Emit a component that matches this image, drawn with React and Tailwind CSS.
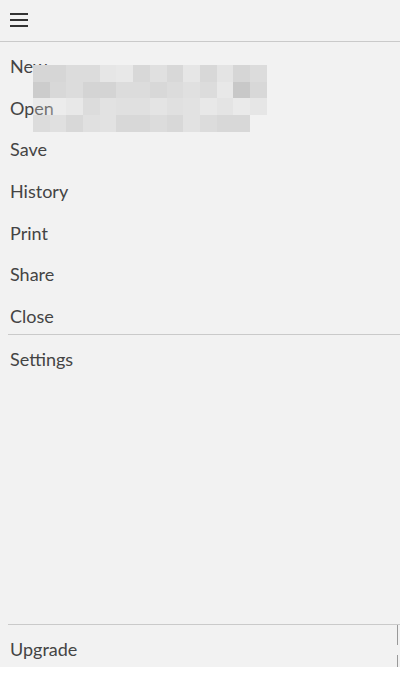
import React from 'react';

const ITEMS = ['New', 'Open', 'Save', 'History', 'Print', 'Share', 'Close'];

// pixelated blur that covers part of the menu in the screenshot
const MOSAIC = [
  ['bg-[#d6d6d6]', 'bg-[#d6d6d6]', 'bg-[#dcdcdc]', 'bg-[#dcdcdc]', 'bg-[#e6e6e6]', 'bg-[#e8e8e8]', 'bg-[#d8d8d8]', 'bg-[#e0e0e0]', 'bg-[#d8d8d8]', 'bg-[#e6e6e6]', 'bg-[#d8d8d8]', 'bg-[#e4e4e4]', 'bg-[#d6d6d6]', 'bg-[#dcdcdc]'],
  ['bg-[#cccccc]', 'bg-[#d8d8d8]', 'bg-[#dcdcdc]', 'bg-[#d4d4d4]', 'bg-[#d4d4d4]', 'bg-[#dcdcdc]', 'bg-[#dcdcdc]', 'bg-[#d8d8d8]', 'bg-[#dcdcdc]', 'bg-[#e0e0e0]', 'bg-[#dcdcdc]', 'bg-[#e8e8e8]', 'bg-[#c8c8c8]', 'bg-[#d8d8d8]'],
  ['bg-[#d8d8d8]/30', 'bg-[#e4e4e4]/40', 'bg-[#e8e8e8]', 'bg-[#dcdcdc]', 'bg-[#e2e2e2]', 'bg-[#e0e0e0]', 'bg-[#e0e0e0]', 'bg-[#e4e4e4]', 'bg-[#e0e0e0]', 'bg-[#e2e2e2]', 'bg-[#e8e8e8]', 'bg-[#e4e4e4]', 'bg-[#eaeaea]', 'bg-[#e6e6e6]'],
  ['bg-[#dcdcdc]', 'bg-[#e0e0e0]', 'bg-[#d8d8d8]', 'bg-[#e0e0e0]', 'bg-[#e2e2e2]', 'bg-[#d8d8d8]', 'bg-[#d8d8d8]', 'bg-[#dcdcdc]', 'bg-[#d8d8d8]', 'bg-[#e2e2e2]', 'bg-[#dcdcdc]', 'bg-[#d8d8d8]', 'bg-[#d8d8d8]'],
];

function MenuItem({ label }) {
  return (
    <div className="h-[41.67px] pt-3 pl-[10px] text-[18px] leading-6 text-[#444444]">{label}</div>
  );
}

export default function App() {
  return (
    <div className="h-[677px] w-[400px] bg-white font-['Lato',sans-serif] overflow-hidden">
      <div className="relative h-[667px] bg-[#f2f2f2] flex flex-col">
        {/* top bar */}
        <div className="h-[42px] border-b border-[#cacaca] flex items-center pl-[10px]">
          <svg width="18" height="16" viewBox="0 0 18 16" className="-mt-[1px]">
            <rect x="0" y="1" width="18" height="2" fill="#333333" />
            <rect x="0" y="7" width="18" height="2" fill="#333333" />
            <rect x="0" y="13" width="18" height="2" fill="#333333" />
          </svg>
        </div>

        <div className="relative">
          {ITEMS.map((i) => (
            <MenuItem key={i} label={i} />
          ))}
          <div className="absolute left-[33px] top-[23px] flex flex-col">
            {MOSAIC.map((row, r) => (
              <div key={r} className="flex h-[16.7px]">
                {row.map((c, k) => (
                  <div key={k} className={`w-[16.7px] h-full ${c}`} />
                ))}
              </div>
            ))}
          </div>
        </div>

        <div className="ml-2 border-t border-[#cacaca]" />
        <MenuItem label="Settings" />

        <div className="flex-1" />

        <div className="ml-2 border-t border-[#cacaca]" />
        <MenuItem label="Upgrade" />

        {/* scrollbar marks at the right edge */}
        <div className="absolute right-[2px] top-[625px] w-px h-[20px] bg-[#999999]" />
        <div className="absolute right-[2px] top-[655px] w-px h-[12px] bg-[#999999]" />
      </div>
    </div>
  );
}
